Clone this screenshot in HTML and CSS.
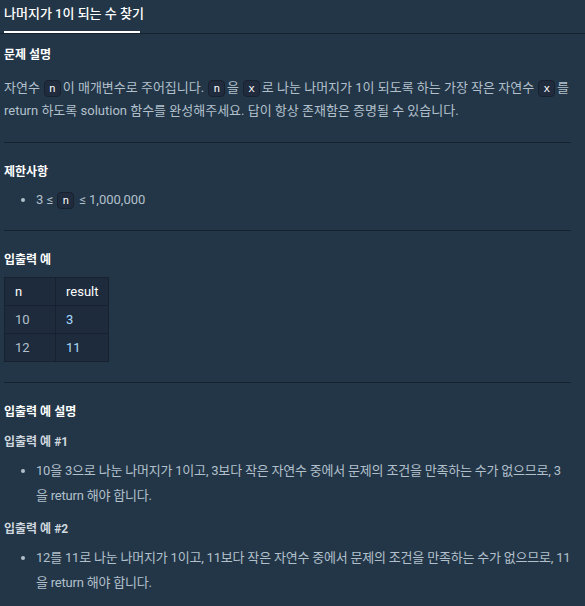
FILE: index.html
```html
<!DOCTYPE html>
<html lang="ko">
<head>
    <meta charset="UTF-8">
    <meta name="viewport" content="width=device-width, initial-scale=1.0">
    <title>나머지가 1이 되는 수 찾기</title>
    <link rel="stylesheet" href="styles.css">
</head>
<body>

    <div class="tabs">
        <div class="tab">나머지가 1이 되는 수 찾기</div>
    </div>

    <div class="guide">
        <h6>문제 설명</h6>
        <p>자연수 <code>n</code>이 매개변수로 주어집니다. <code>n</code>을 <code>x</code>로 나눈 나머지가 1이 되도록 하는 가장 작은 자연수 <code>x</code>를 return 하도록 solution 함수를 완성해주세요. 답이 항상 존재함은 증명될 수 있습니다.</p>

        <hr>

        <h5>제한사항</h5>
        <ul>
            <li>3 ≤ <code>n</code> ≤ 1,000,000</li>
        </ul>

        <hr>

        <h5>입출력 예</h5>
        <table class="examples">
            <thead>
                <tr><th>n</th><th>result</th></tr>
            </thead>
            <tbody>
                <tr><td>10</td><td class="out">3</td></tr>
                <tr><td>12</td><td class="out">11</td></tr>
            </tbody>
        </table>

        <hr>

        <h5>입출력 예 설명</h5>
        <p class="case">입출력 예 #1</p>
        <ul class="explain">
            <li>10을 3으로 나눈 나머지가 1이고, 3보다 작은 자연수 중에서 문제의 조건을 만족하는 수가 없으므로, 3<wbr>을 return 해야 합니다.</li>
        </ul>

        <p class="case">입출력 예 #2</p>
        <ul class="explain">
            <li>12를 11로 나눈 나머지가 1이고, 11보다 작은 자연수 중에서 문제의 조건을 만족하는 수가 없으므로, 11<wbr>을 return 해야 합니다.</li>
        </ul>
    </div>

</body>
</html>
```

FILE: styles.css
```css
body {
    font-family: Roboto, 'Noto Sans CJK KR', sans-serif;
    background: #233647;
    color: #b2c0cc;
    margin: 0;
    padding: 0;
    font-size: 13px;
}

.tabs {
    height: 33px;
    border-bottom: 1px solid #172231;
    padding-left: 4px;
}

.tab {
    display: inline-block;
    width: 136px;
    height: 31px;
    line-height: 28px;
    color: #ffffff;
    font-size: 13px;
    font-weight: 500;
    border-bottom: 2px solid #ffffff;
    white-space: nowrap;
}

.guide {
    padding: 0 14px 0 4px;
}

h5, h6 {
    color: #ffffff;
    font-size: 12px;
    font-weight: bold;
    margin: 0;
    line-height: 18px;
}

h6 {
    margin-top: 12px;
}

p {
    margin: 12px 0 0;
    line-height: 23px;
}

code {
    display: inline-block;
    font-family: 'DejaVu Sans Mono', monospace;
    font-size: 11px;
    line-height: 15px;
    color: #ffffff;
    background: #202b3d;
    border: 1px solid #172130;
    border-radius: 4px;
    padding: 0 4px;
    margin: 0 2px 0 1px;
}

hr {
    border: none;
    border-top: 1px solid #172231;
    margin: 20px 0;
}

ul {
    margin: 6px 0 0;
    padding-left: 32px;
}

ul + hr {
    margin-top: 18px;
}

li {
    line-height: 25px;
}

.explain li {
    letter-spacing: -0.2px;
}

.examples {
    border-collapse: collapse;
    margin-top: 8px;
    background: #1e2b3c;
}

.examples th, .examples td {
    border: 1px solid #172130;
    text-align: left;
    font-weight: normal;
    padding: 0 0 0 10px;
    height: 27px;
}

.examples th {
    color: #ffffff;
    width: 40px;
}

.examples th + th {
    width: 42px;
}

.examples td.out {
    color: #a6dcff;
}

.case {
    color: #cfd7df;
    font-weight: bold;
    font-size: 12px;
    line-height: 18px;
    margin-top: 12px;
}

.case + ul {
    margin-top: 7px;
}
```
